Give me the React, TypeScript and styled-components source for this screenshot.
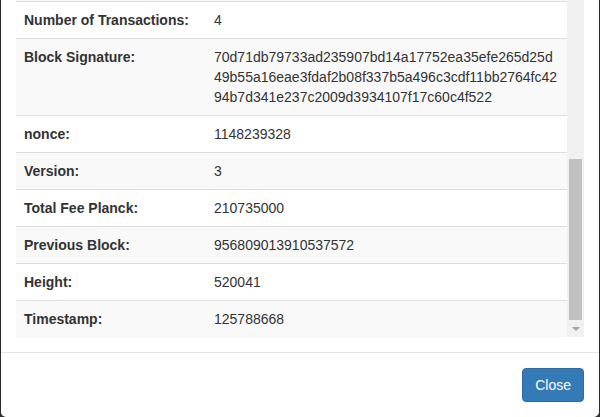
import React from "react";
import styled, { createGlobalStyle } from "styled-components";

const GlobalStyle = createGlobalStyle`
  html, body {
    margin: 0;
    padding: 0;
    background: #333;
  }
  body {
    font-family: "Liberation Sans", Arial, sans-serif;
    font-size: 14px;
    line-height: 1.42857;
    color: #333;
    overflow: hidden;
  }
  * { box-sizing: border-box; }
`;

const Modal = styled.div`
  width: 600px;
  background: #fff;
  border: 1px solid #2b2b2b;
  border-top: none;
  border-radius: 0 0 6px 6px;
`;

const ModalBody = styled.div`
  padding: 0 15px 15px;
`;

const ScrollFrame = styled.div`
  display: flex;
  height: 337px;
  overflow: hidden;
`;

const TableArea = styled.div`
  flex: 1;
  min-width: 0;
  display: flex;
  flex-direction: column;
  justify-content: flex-end;
  overflow: hidden;
`;

const PrevRowEdge = styled.div`
  height: 1px;
  flex: none;
  background: #f9f9f9;
`;

const Table = styled.table`
  width: 100%;
  border-collapse: collapse;
  border-spacing: 0;
  table-layout: fixed;
`;

const Row = styled.tr`
  background: transparent;
  &:nth-of-type(even) {
    background: #f9f9f9;
  }
`;

const Label = styled.th`
  width: 190px;
  padding: 8px;
  border-top: 1px solid #ddd;
  text-align: left;
  vertical-align: top;
  font-weight: bold;
  line-height: 20px;
  color: #333;
`;

const Value = styled.td`
  padding: 8px;
  border-top: 1px solid #ddd;
  vertical-align: top;
  line-height: 20px;
  color: #333;
  word-break: break-all;
`;

const Line = styled.span`
  display: block;
`;

const Scrollbar = styled.div`
  width: 17px;
  flex: none;
  display: flex;
  flex-direction: column;
  background: #f1f1f1;
`;

const Track = styled.div`
  flex: 1;
  display: flex;
  flex-direction: column;
  justify-content: flex-end;
  padding: 0 2px;
`;

const Thumb = styled.div`
  background: #c1c1c1;
`;

const ArrowButton = styled.div`
  height: 17px;
  flex: none;
  display: flex;
  align-items: center;
  justify-content: center;
`;

const ModalFooter = styled.div`
  padding: 15px;
  border-top: 1px solid #e5e5e5;
  text-align: right;
`;

const Button = styled.button`
  display: inline-block;
  font-family: "Liberation Sans", Arial, sans-serif;
  font-size: 14px;
  line-height: 20px;
  padding: 6px 12px;
  color: #fff;
  background-color: #337ab7;
  border: 1px solid #2e6da4;
  border-radius: 4px;
  cursor: pointer;
`;

type Field = { label: string; value: string | string[] };

const fields: Field[] = [
  { label: "Number of Transactions:", value: "4" },
  {
    label: "Block Signature:",
    value: [
      "70d71db79733ad235907bd14a17752ea35efe265d25d",
      "49b55a16eae3fdaf2b08f337b5a496c3cdf11bb2764fc42",
      "94b7d341e237c2009d3934107f17c60c4f522",
    ],
  },
  { label: "nonce:", value: "1148239328" },
  { label: "Version:", value: "3" },
  { label: "Total Fee Planck:", value: "210735000" },
  { label: "Previous Block:", value: "956809013910537572" },
  { label: "Height:", value: "520041" },
  { label: "Timestamp:", value: "125788668" },
];

// visible height / total content height of the scrolled list
const thumbRatio = 337 / 669;
const trackLength = 320;

export default function App() {
  return (
    <>
      <GlobalStyle />
      <Modal>
        <ModalBody>
          <ScrollFrame>
            <TableArea>
              <PrevRowEdge />
              <Table>
                <tbody>
                  {fields.map((f) => (
                    <Row key={f.label}>
                      <Label>{f.label}</Label>
                      <Value>
                        {Array.isArray(f.value)
                          ? f.value.map((l) => <Line key={l}>{l}</Line>)
                          : f.value}
                      </Value>
                    </Row>
                  ))}
                </tbody>
              </Table>
            </TableArea>
            <Scrollbar>
              <Track>
                <Thumb style={{ height: Math.round(trackLength * thumbRatio) }} />
              </Track>
              <ArrowButton>
                <svg width="8" height="4" viewBox="0 0 8 4">
                  <path d="M0 0 L8 0 L4 4 Z" fill="#a3a3a3" />
                </svg>
              </ArrowButton>
            </Scrollbar>
          </ScrollFrame>
        </ModalBody>
        <ModalFooter>
          <Button type="button">Close</Button>
        </ModalFooter>
      </Modal>
    </>
  );
}
